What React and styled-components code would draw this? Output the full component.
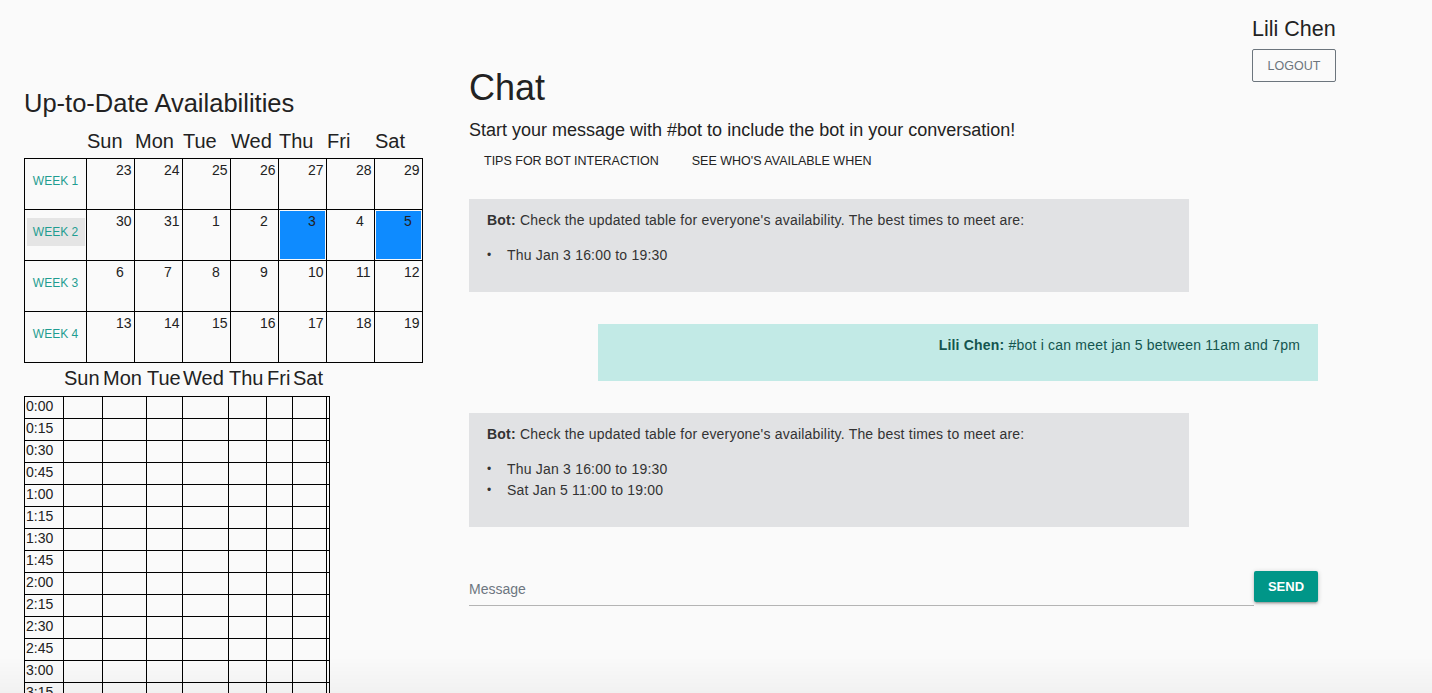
import React from 'react'
import styled, { createGlobalStyle } from 'styled-components'

const GlobalStyle = createGlobalStyle`
  body {
    margin: 0;
    background: #fafafa;
    color: #222;
    font-family: 'Liberation Sans', Helvetica, Arial, sans-serif;
  }
  * {
    box-sizing: border-box;
  }
`

const Page = styled.div`
  min-height: 100vh;
`

const Header = styled.header`
  display: flex;
  justify-content: flex-end;
  align-items: flex-start;
  height: 66px;
  padding: 16px 96px 0 0;
`

const UserBlock = styled.div`
  display: flex;
  flex-direction: column;
  align-items: flex-start;
  width: 84px;
`

const UserName = styled.div`
  font-size: 21.5px;
  line-height: 26px;
  font-weight: 300;
  white-space: nowrap;
  color: #222;
`

const LogoutButton = styled.button`
  flex-shrink: 0;
  margin-top: 7px;
  width: 84px;
  height: 33px;
  border: 1px solid #6c757d;
  border-radius: 2px;
  background: transparent;
  color: #6c757d;
  font-family: inherit;
  font-size: 12.5px;
  text-transform: uppercase;
  padding: 0;
`

const Main = styled.main`
  display: flex;
  align-items: flex-start;
  padding-left: 24px;
`

const LeftColumn = styled.section`
  width: 399px;
  flex-shrink: 0;
  padding-top: 23px;
`

const SectionTitle = styled.h2`
  margin: 0;
  font-size: 25.5px;
  line-height: 28px;
  font-weight: 300;
  white-space: nowrap;
`

const CalendarHead = styled.div`
  display: grid;
  grid-template-columns: 63px repeat(7, 48px);
  height: 29px;
  margin-top: 12px;
  font-size: 20px;
  line-height: 24px;
  font-weight: 300;
`

const Calendar = styled.div`
  display: grid;
  grid-template-columns: 62px repeat(7, 48px);
  grid-auto-rows: 51px;
  width: max-content;
  border-top: 1px solid #000;
  border-left: 1px solid #000;
`

const WeekCell = styled.div`
  display: flex;
  align-items: center;
  justify-content: center;
  padding-bottom: 6px;
  border-right: 1px solid #000;
  border-bottom: 1px solid #000;
`

const WeekButton = styled.button`
  width: 58px;
  height: 28px;
  padding: 0;
  border: none;
  background: ${p => (p.$active ? '#e5e5e5' : 'transparent')};
  color: #1f9d91;
  font-family: inherit;
  font-size: 12px;
  text-transform: uppercase;
`

const DateCell = styled.div`
  padding: 3px 0 0 29px;
  text-align: left;
  font-size: 14px;
  line-height: 16px;
  border-right: 1px solid #000;
  border-bottom: 1px solid #000;
  background: ${p => (p.$marked ? '#0e8bff' : 'transparent')};
  box-shadow: ${p => (p.$marked ? 'inset 0 0 0 1px #fafafa' : 'none')};
`

const scheduleCols = '39px 39px 44px 36px 46px 38px 26px 34px 3px'

const ScheduleHead = styled.div`
  display: grid;
  grid-template-columns: 40px 39px 44px 36px 46px 38px 26px 34px;
  height: 30px;
  margin-top: 3px;
  font-size: 20px;
  line-height: 24px;
  font-weight: 300;
`

const Schedule = styled.div`
  display: grid;
  grid-template-columns: ${scheduleCols};
  grid-auto-rows: 22px;
  width: max-content;
  border-top: 1px solid #000;
  border-left: 1px solid #000;
`

const SlotCell = styled.div`
  padding-left: 1px;
  font-size: 14px;
  line-height: 18px;
  border-right: 1px solid #000;
  border-bottom: 1px solid #000;
`

const ChatColumn = styled.section`
  width: 849px;
  flex-shrink: 0;
  margin-left: 46px;
  padding-top: 2px;
`

const ChatTitle = styled.h1`
  margin: 0;
  font-size: 36px;
  line-height: 40px;
  font-weight: 300;
`

const Subtitle = styled.p`
  margin: 12px 0 0;
  font-size: 18px;
  line-height: 20px;
  font-weight: 300;
`

const Tabs = styled.div`
  display: flex;
  gap: 3px;
  margin-top: 3px;
`

const TabButton = styled.button`
  height: 36px;
  padding: 0 15px;
  border: none;
  background: transparent;
  color: #222;
  font-family: inherit;
  font-size: 12.5px;
  text-transform: uppercase;
`

const MessageList = styled.div`
  display: flex;
  flex-direction: column;
  gap: 32px;
  margin-top: 20px;
`

const Bubble = styled.div`
  width: 720px;
  align-self: ${p => (p.$mine ? 'flex-end' : 'flex-start')};
  padding: 11px 18px ${p => (p.$mine ? '25px' : '26px')};
  background: ${p => (p.$mine ? '#c2eae6' : '#e1e2e4')};
  color: ${p => (p.$mine ? '#14554f' : '#333')};
  text-align: ${p => (p.$mine ? 'right' : 'left')};
  font-size: 14px;
  line-height: 21px;
  letter-spacing: 0.2px;

  p {
    margin: 0;
  }
`

const TimeList = styled.ul`
  margin: 14px 0 0;
  padding: 0 0 0 20px;
  list-style: none;

  li {
    height: 21px;
  }

  li::before {
    content: '•';
    display: inline-block;
    width: 20px;
    margin-left: -20px;
    font-size: 12px;
    line-height: 21px;
    vertical-align: top;
  }
`

const Composer = styled.form`
  display: flex;
  align-items: flex-start;
  margin-top: 44px;
`

const MessageInput = styled.input`
  flex: 1;
  height: 33px;
  margin-top: 2px;
  padding: 0;
  border: none;
  border-bottom: 1px solid #b4b4b4;
  background: transparent;
  font-family: inherit;
  font-size: 14px;
  outline: none;

  &::placeholder {
    color: #6d7680;
  }
`

const SendButton = styled.button`
  width: 64px;
  height: 31px;
  padding: 0;
  border: none;
  border-radius: 2px;
  background: #009688;
  color: #fff;
  font-family: inherit;
  font-size: 13px;
  font-weight: bold;
  text-transform: uppercase;
  box-shadow: 0 2px 2px 0 rgba(0, 0, 0, 0.14), 0 3px 1px -2px rgba(0, 0, 0, 0.12),
    0 1px 5px 0 rgba(0, 0, 0, 0.2);
`

const BottomFade = styled.div`
  position: fixed;
  left: 0;
  right: 0;
  bottom: 0;
  height: 36px;
  pointer-events: none;
  background: linear-gradient(to bottom, rgba(0, 0, 0, 0), rgba(0, 0, 0, 0.035));
`

const days = ['Sun', 'Mon', 'Tue', 'Wed', 'Thu', 'Fri', 'Sat']

const weeks = [
  { label: 'Week 1', dates: [23, 24, 25, 26, 27, 28, 29] },
  { label: 'Week 2', dates: [30, 31, 1, 2, 3, 4, 5], active: true, marked: [4, 6] },
  { label: 'Week 3', dates: [6, 7, 8, 9, 10, 11, 12] },
  { label: 'Week 4', dates: [13, 14, 15, 16, 17, 18, 19] },
]

const slots = []
for (let h = 0; h < 24; h++) {
  for (let m = 0; m < 60; m += 15) {
    slots.push(`${h}:${m === 0 ? '00' : m}`)
  }
}

const messages = [
  {
    from: 'Bot',
    text: "Check the updated table for everyone's availability. The best times to meet are:",
    times: ['Thu Jan 3 16:00 to 19:30'],
  },
  { from: 'Lili Chen', text: '#bot i can meet jan 5 between 11am and 7pm', mine: true },
  {
    from: 'Bot',
    text: "Check the updated table for everyone's availability. The best times to meet are:",
    times: ['Thu Jan 3 16:00 to 19:30', 'Sat Jan 5 11:00 to 19:00'],
  },
]

export default function App() {
  return (
    <Page>
      <GlobalStyle />
      <Header>
        <UserBlock>
          <UserName>Lili Chen</UserName>
          <LogoutButton>Logout</LogoutButton>
        </UserBlock>
      </Header>
      <Main>
        <LeftColumn>
          <SectionTitle>Up-to-Date Availabilities</SectionTitle>
          <CalendarHead>
            <span />
            {days.map(d => (
              <span key={d}>{d}</span>
            ))}
          </CalendarHead>
          <Calendar>
            {weeks.map(week => (
              <React.Fragment key={week.label}>
                <WeekCell>
                  <WeekButton $active={week.active}>{week.label}</WeekButton>
                </WeekCell>
                {week.dates.map((d, i) => (
                  <DateCell key={i} $marked={week.marked && week.marked.includes(i)}>
                    {d}
                  </DateCell>
                ))}
              </React.Fragment>
            ))}
          </Calendar>
          <ScheduleHead>
            <span />
            {days.map(d => (
              <span key={d}>{d}</span>
            ))}
          </ScheduleHead>
          <Schedule>
            {slots.map(t => (
              <React.Fragment key={t}>
                <SlotCell>{t}</SlotCell>
                {[0, 1, 2, 3, 4, 5, 6, 7].map(i => (
                  <SlotCell key={i} />
                ))}
              </React.Fragment>
            ))}
          </Schedule>
        </LeftColumn>
        <ChatColumn>
          <ChatTitle>Chat</ChatTitle>
          <Subtitle>Start your message with #bot to include the bot in your conversation!</Subtitle>
          <Tabs>
            <TabButton>Tips for bot interaction</TabButton>
            <TabButton>See who's available when</TabButton>
          </Tabs>
          <MessageList>
            {messages.map((msg, i) => (
              <Bubble key={i} $mine={msg.mine}>
                <p>
                  <b>{msg.from}:</b> {msg.text}
                </p>
                {msg.times && (
                  <TimeList>
                    {msg.times.map(t => (
                      <li key={t}>{t}</li>
                    ))}
                  </TimeList>
                )}
              </Bubble>
            ))}
          </MessageList>
          <Composer onSubmit={e => e.preventDefault()}>
            <MessageInput placeholder="Message" />
            <SendButton type="submit">Send</SendButton>
          </Composer>
        </ChatColumn>
      </Main>
      <BottomFade />
    </Page>
  )
}
